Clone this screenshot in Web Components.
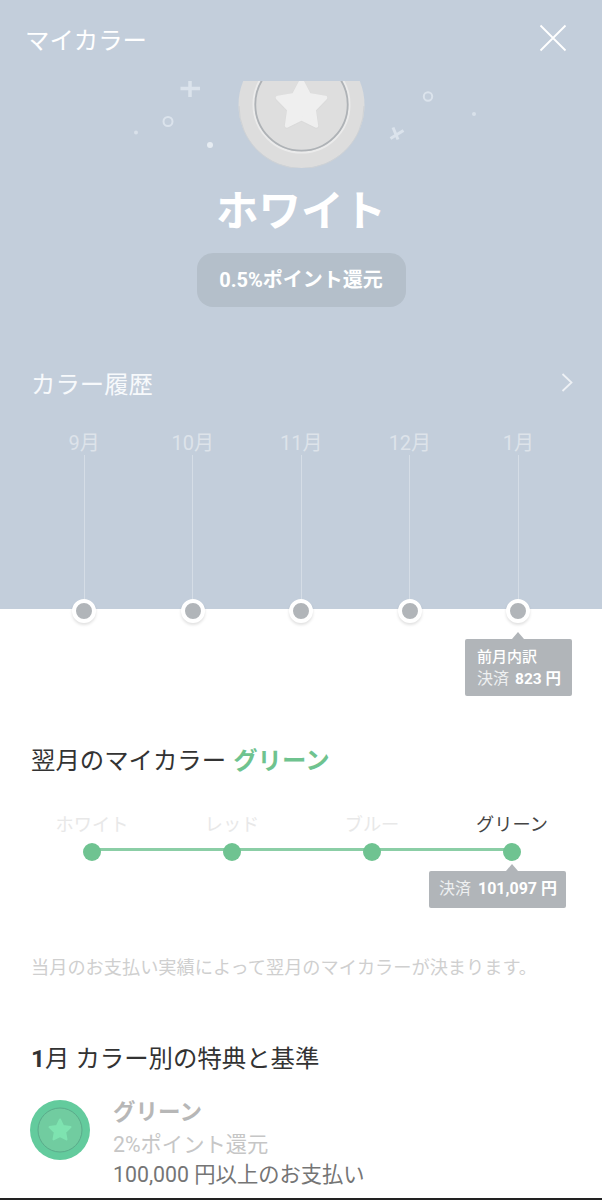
<!DOCTYPE html>
<html lang="ja"><head><meta charset="utf-8">
<style>
html,body{margin:0;padding:0;background:#fff}
body{font-family:Roboto,"Noto Sans CJK JP",sans-serif;width:602px;height:1200px;overflow:hidden}
</style></head><body>
<my-color-page></my-color-page>
<script>
const FONT='Roboto,"Noto Sans CJK JP",sans-serif';
const STAR=(cx,cy,R,r)=>{let p=[];for(let i=0;i<10;i++){const a=-Math.PI/2+i*Math.PI/5,d=i%2?r:R;p.push((cx+d*Math.cos(a)).toFixed(1)+' '+(cy+d*Math.sin(a)).toFixed(1));}return 'M'+p.join('L')+'Z';};
function def(name,html){customElements.define(name,class extends HTMLElement{connectedCallback(){if(this.shadowRoot)return;const s=this.attachShadow({mode:'open'});s.innerHTML=typeof html==='function'?html(this):html;}});}

def('my-tip',e=>`<style>
:host{display:block;position:relative;background:#b1b5b9;border-radius:2px;color:#fff;font-size:15px;line-height:22px;box-sizing:border-box}
.a{position:absolute;top:-7px;left:var(--arrow);width:0;height:0;margin-left:-6px;border:solid transparent;border-width:0 6px 7px;border-bottom-color:#b1b5b9}
</style><div class="a"></div><slot></slot>`);

def('my-medal',`<style>
:host{display:block;position:relative;height:87px;width:602px}
.clip{position:absolute;left:0;top:0;width:602px;height:87px;overflow:hidden}
svg{display:block}
.sp{position:absolute;left:0;top:0}
</style>
<svg class="sp" width="602" height="110" viewBox="0 81 602 110">
<g fill="none" stroke="#dbe3ec">
<path d="M180.500 88.500H200M190 80V97" stroke-width="3.500"/>
<circle cx="168" cy="121.500" r="4.500" stroke-width="2"/>
<circle cx="428" cy="96.500" r="4.200" stroke-width="2"/>
<path d="M390.500 138.500L403.500 130.500M393 127.500L398 139.500" stroke-width="3"/>
</g>
<g fill="#d9e1ea">
<circle cx="136" cy="132.500" r="2"/><circle cx="474" cy="114" r="2"/></g>
<circle cx="210" cy="145" r="3" fill="#e6ecf2"/>
</svg>
<div class="clip"><svg width="602" height="87" viewBox="0 81 602 87">
<circle cx="301.500" cy="105" r="63" fill="#dddddd"/>
<path d="M239 106a62.500 62.500 0 0 0 125 0" fill="none" stroke="#cfd2d5" stroke-width="1"/>
<circle cx="301.500" cy="104.500" r="48" fill="none" stroke="#ebebeb" stroke-width="2"/>
<circle cx="301.500" cy="104.500" r="46.200" fill="#dedede" stroke="#aeb2b6" stroke-width="1.800"/>
<path d="${STAR(301.5,106,25,13)}" fill="#dadada" stroke="#dadada" stroke-width="5" stroke-linejoin="round"/>
<path d="${STAR(301.5,105.5,25,13)}" fill="#efefef" stroke="#efefef" stroke-width="4" stroke-linejoin="round"/>
</svg></div>`);

def('my-hero-head',`<style>
:host{display:flex;justify-content:space-between;align-items:center;height:81px;box-sizing:border-box;padding:0 35px 5px 25px;color:#fff;font-size:24.400px}
svg{display:block}
</style><span>マイカラー</span>
<svg width="28" height="28" viewBox="0 0 28 28"><path d="M1.500 1.500L26.500 26.500M26.500 1.500L1.500 26.500" stroke="#fff" stroke-width="1.800" fill="none"/></svg>`);

def('my-month',e=>`<style>
:host{display:flex;flex-direction:column;align-items:center;height:100%}
.m{font-size:20px;line-height:24px;height:24px;color:#dde3ea}
.l{flex:1;width:1px;background:#d5dde6}
.d{width:24px;height:24px;box-sizing:border-box;border:4px solid #fff;border-radius:50%;background:#b1b5b9;box-shadow:0 2px 3px rgba(0,0,0,.12);margin-bottom:-14px;position:relative;z-index:1}
</style><div class="m"><slot></slot></div><div class="l"></div><div class="d"></div>`);

def('my-hero',`<style>
:host{display:block;background:#c3cedb;height:609px;color:#fff;position:relative;z-index:1}
h1{margin:0;font-size:42.500px;line-height:60px;font-weight:700;text-align:center;padding-top:14px;color:#fff}
.pill{display:block;width:209px;height:54px;line-height:55px;margin:11px auto 0;text-align:center;background:#b4bfca;border-radius:16px;font-size:20px;font-weight:700}
.hist{display:flex;justify-content:space-between;align-items:center;height:40px;margin-top:55px;padding:0 29px 0 31px;font-size:24.400px;color:#f7f9fb}
svg{display:block}
.tl{display:grid;grid-template-columns:repeat(5,108.6px);padding-left:29.800px;height:178px;margin-top:29px}
</style>
<my-hero-head></my-hero-head>
<my-medal></my-medal>
<h1>ホワイト</h1>
<div class="pill">0.5%ポイント還元</div>
<div class="hist"><span>カラー履歴</span>
<svg width="12" height="19" viewBox="0 0 12 19"><path d="M1.500 1L10.500 9.500L1.500 18" fill="none" stroke="#eef1f5" stroke-width="1.800"/></svg></div>
<div class="tl"><my-month>9月</my-month><my-month>10月</my-month><my-month>11月</my-month><my-month>12月</my-month><my-month>1月</my-month></div>`);

def('my-step',e=>`<style>
:host{display:flex;flex-direction:column;align-items:center;width:140px;position:relative}
.t{font-size:18.200px;line-height:26px;height:26px;color:${e.hasAttribute('on')?'#444':'#e8e8e8'};white-space:nowrap}
.d{width:18px;height:18px;border-radius:50%;background:#6fc391;margin-top:5px;position:relative;z-index:1}
.b{position:absolute;left:70px;top:36px;width:140px;height:3px;background:#8bcea6;display:${e.hasAttribute('last')?'none':'block'}}
</style><div class="t"><slot></slot></div><div class="d"></div><div class="b"></div>`);

def('my-next',`<style>
:host{display:block;padding-top:48px}
h2{margin:0;padding-left:31px;font-size:24.400px;line-height:34px;font-weight:400;color:#333}
h2 b{color:#6fc38f;font-weight:700;margin-left:1px}
.steps{display:flex;padding-left:22px;margin-top:34px}
.row{display:flex;justify-content:flex-end;padding-right:36px;margin-top:10px}
my-tip{width:137px;height:37px;line-height:36px;padding-left:10px;--arrow:83px;white-space:nowrap;color:#eef0f1;font-size:16px}
my-tip b{color:#fff;font-weight:700;font-size:16px;margin-left:3px}
p{margin:0;padding:47px 0 0 31px;font-size:18.200px;line-height:26px;color:#cfcfcf}
</style>
<h2>翌月のマイカラー <b>グリーン</b></h2>
<div class="steps"><my-step>ホワイト</my-step><my-step>レッド</my-step><my-step>ブルー</my-step><my-step on last>グリーン</my-step></div>
<div class="row"><my-tip>決済 <b>101,097 円</b></my-tip></div>
<p>当月のお支払い実績によって翌月のマイカラーが決まります。</p>`);

def('my-benefit',`<style>
:host{display:block;padding-top:61px}
h2{margin:0;padding-left:31px;font-size:24.400px;line-height:34px;font-weight:400;color:#333}
h2 b{font-weight:700}
.row{display:flex;align-items:flex-start;gap:23px;padding:0 0 0 30px;margin-top:21px}
svg{display:block;flex:none;margin-top:3px}
.n{font-size:22.500px;font-weight:700;line-height:30px;color:#b7b7b7}
.r{font-size:21.300px;line-height:30px;color:#c6c6c6;margin-top:3px}
.c{font-size:21.300px;line-height:30px;color:#757575}
</style>
<h2><b>1</b>月 カラー別の特典と基準</h2>
<div class="row">
<svg width="60" height="60" viewBox="0 0 60 60"><circle cx="30" cy="30" r="30" fill="#63cb9d"/><circle cx="30" cy="30" r="22" fill="#71cca0" stroke="#5bab8b" stroke-width="1"/><path d="${STAR(30,30.5,11,5.5)}" fill="#7ee3b0" stroke="#7ee3b0" stroke-width="2" stroke-linejoin="round"/></svg>
<div><div class="n">グリーン</div><div class="r">2%ポイント還元</div><div class="c">100,000 円以上のお支払い</div></div>
</div>`);

def('my-color-page',`<style>
:host{display:flex;flex-direction:column;width:602px;height:1200px;overflow:hidden;position:relative;background:#fff;font-family:${FONT}}
.tipwrap{display:flex;justify-content:flex-end;padding:30px 30px 0 0;height:57px}
my-tip{width:107px;height:57px;padding:7px 0 0 12px;--arrow:53px}
my-tip b{font-weight:500}
.v{color:#eef0f1;white-space:nowrap;font-size:16px}
.v b{color:#fff;font-weight:700;margin-left:2px;font-size:15.500px}
.main{flex:1;min-height:0}
.nav{height:2px;background:#222;flex:none}
</style>
<my-hero></my-hero>
<div class="tipwrap"><my-tip><b>前月内訳</b><div class="v">決済 <b>823 円</b></div></my-tip></div>
<div class="main"><my-next></my-next><my-benefit></my-benefit></div>
<div class="nav"></div>`);
</script>
</body></html>
